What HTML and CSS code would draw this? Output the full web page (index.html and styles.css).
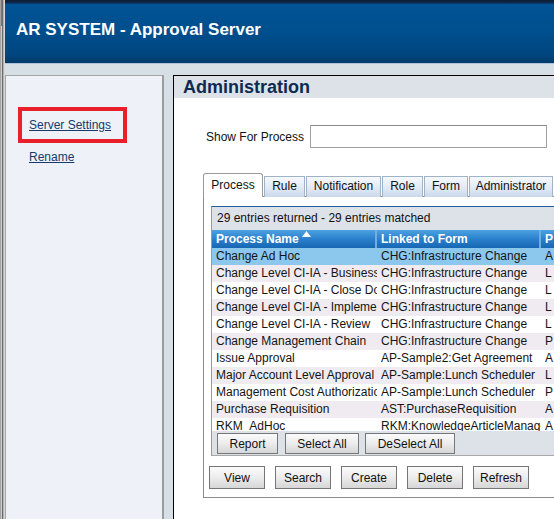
FILE: index.html
```html
<!DOCTYPE html>
<html>
<head>
<meta charset="utf-8">
<link rel="stylesheet" href="styles.css">
</head>
<body>
<div class="page">
  <div class="edge"><div class="edge-blue"></div></div>
  <div class="app">
    <div class="header"><div class="title">AR SYSTEM - Approval Server</div></div>
    <div class="content">
      <div class="side">
        <div class="nav-item highlighted"><a href="#">Server Settings</a></div>
        <div class="nav-item plain"><a href="#">Rename</a></div>
      </div>
      <div class="main">
        <div class="main-head">Administration</div>
        <div class="main-body">
          <div class="form-row">
            <div class="label">Show For Process</div>
            <input class="field" type="text">
          </div>
          <div class="tabs">
            <div class="tab active t-process">Process</div>
            <div class="tab t-rule">Rule</div>
            <div class="tab t-notif">Notification</div>
            <div class="tab t-role">Role</div>
            <div class="tab t-form">Form</div>
            <div class="tab t-admin">Administrator</div>
          </div>
          <div class="tab-panel">
            <div class="grid">
              <div class="info">29 entries returned - 29 entries matched</div>
              <div class="grid-head">
                <div class="hcell">Process Name <svg class="sort" width="9" height="6" viewBox="0 0 9 6"><path d="M0 6 L4.5 0 L9 6 Z" fill="#ffffff"/></svg></div>
                <div class="hcell">Linked to Form</div>
                <div class="hcell last">P</div>
              </div>
              <div class="rows">
                <div class="row selected"><div class="cell">Change Ad Hoc</div><div class="cell">CHG:Infrastructure Change</div><div class="cell">A</div></div>
                <div class="row alt"><div class="cell">Change Level CI-IA - Business</div><div class="cell">CHG:Infrastructure Change</div><div class="cell">L</div></div>
                <div class="row"><div class="cell">Change Level CI-IA - Close Down</div><div class="cell">CHG:Infrastructure Change</div><div class="cell">L</div></div>
                <div class="row alt"><div class="cell">Change Level CI-IA - Implementation</div><div class="cell">CHG:Infrastructure Change</div><div class="cell">L</div></div>
                <div class="row"><div class="cell">Change Level CI-IA - Review</div><div class="cell">CHG:Infrastructure Change</div><div class="cell">L</div></div>
                <div class="row alt"><div class="cell">Change Management Chain</div><div class="cell">CHG:Infrastructure Change</div><div class="cell">P</div></div>
                <div class="row"><div class="cell">Issue Approval</div><div class="cell">AP-Sample2:Get Agreement</div><div class="cell">A</div></div>
                <div class="row alt"><div class="cell">Major Account Level Approval</div><div class="cell">AP-Sample:Lunch Scheduler</div><div class="cell">L</div></div>
                <div class="row"><div class="cell">Management Cost Authorization</div><div class="cell">AP-Sample:Lunch Scheduler</div><div class="cell">P</div></div>
                <div class="row alt"><div class="cell">Purchase Requisition</div><div class="cell">AST:PurchaseRequisition</div><div class="cell">A</div></div>
                <div class="row"><div class="cell">RKM_AdHoc</div><div class="cell">RKM:KnowledgeArticleManager</div><div class="cell">A</div></div>
              </div>
              <div class="grid-bar">
                <button class="btn w-report">Report</button>
                <button class="btn w-selall">Select All</button>
                <button class="btn w-deselall">DeSelect All</button>
              </div>
            </div>
            <div class="actions">
              <button class="btn w-act">View</button>
              <button class="btn w-act">Search</button>
              <button class="btn w-act">Create</button>
              <button class="btn w-act">Delete</button>
              <button class="btn w-act">Refresh</button>
            </div>
          </div>
        </div>
      </div>
    </div>
  </div>
</div>
</body>
</html>
```

FILE: styles.css
```css
html, body {
  margin: 0;
  padding: 0;
}
body {
  width: 554px;
  height: 519px;
  overflow: hidden;
  background: #d6dee6;
  font-family: "Liberation Sans", Arial, sans-serif;
  font-size: 12px;
  color: #111;
}
.page {
  display: flex;
  height: 519px;
  overflow: hidden;
}
.edge {
  width: 5px;
  flex: none;
  background: linear-gradient(to right, #a4a4a4 0 1px, #cdcdcd 1px 2px, #6c6c6c 2px 3px, #b4b4b4 3px 4px, #d8d8d8 4px 5px);
}
.edge-blue {
  margin-left: 1px;
  width: 1px;
  height: 26px;
  background: #4d7fc0;
}
.app {
  flex: 1;
  min-width: 0;
  display: flex;
  flex-direction: column;
}
.header {
  height: 63px;
  flex: none;
  border-bottom: 1px solid #a9c2da;
  background: linear-gradient(#0b1d33 0, #10284a 3px, #005395 4px, #004f8e 30px, #00467f 55px, #003a6a 63px);
}
.title {
  padding: 20px 0 0 11px;
  font-size: 17px;
  line-height: 20px;
  font-weight: bold;
  color: #ffffff;
  white-space: nowrap;
}
.content {
  flex: 1;
  display: flex;
  gap: 9px;
  padding-top: 11px;
  min-height: 0;
}
.side {
  width: 159px;
  flex: none;
  box-sizing: border-box;
  background: #eef2f8;
  border: 1px solid #a6a6a6;
  border-bottom: none;
  border-right: 2px solid #9c9c9c;
  padding-top: 31px;
}
.nav-item a {
  color: #163a6c;
  text-decoration: underline;
  font-size: 12px;
}
.highlighted {
  margin-left: 12px;
  width: 94px;
  height: 28px;
  border: 4px solid #e8202a;
  line-height: 28px;
  padding-left: 7px;
}
.plain {
  margin-top: 6px;
  padding-left: 23px;
  line-height: 16px;
}
.main {
  width: 430px;
  flex: none;
  background: #ffffff;
  border-left: 1px solid #000;
  border-top: 1px solid #000;
}
.main-head {
  height: 22px;
  line-height: 22px;
  background: #dde2e8;
  padding-left: 9px;
  font-size: 18px;
  font-weight: bold;
  color: #0d2b52;
}
.main-body {
  padding-left: 29px;
}
.form-row {
  display: flex;
  align-items: center;
  margin-top: 27px;
  height: 23px;
}
.label {
  width: 99px;
  padding-left: 3px;
  margin-right: 5px;
  overflow: hidden;
  white-space: nowrap;
  flex: none;
  color: #111;
}
.field {
  width: 237px;
  height: 23px;
  box-sizing: border-box;
  border: 1px solid #a0a0a0;
  border-top-color: #8a8a8a;
  margin: 0;
  padding: 0;
  background: #fff;
}
.tabs {
  display: flex;
  align-items: flex-end;
  gap: 1px;
  margin-top: 25px;
  height: 24px;
  margin-bottom: -1px;
  position: relative;
  z-index: 1;
}
.tab {
  height: 21px;
  box-sizing: border-box;
  line-height: 19px;
  text-align: center;
  border: 1px solid #9fb2c6;
  border-bottom: none;
  background: linear-gradient(#f6f9fd, #dfe8f4 60%, #c9d8ec);
  white-space: nowrap;
  color: #111;
  flex: none;
}
.tab.active {
  height: 24px;
  line-height: 22px;
  background: #ffffff;
  border-color: #9a9a9a;
  border-radius: 3px 3px 0 0;
}
.t-process { width: 60px; }
.t-rule { width: 41px; }
.t-notif { width: 75px; }
.t-role { width: 41px; }
.t-form { width: 44px; }
.t-admin { width: 84px; }
.tab-panel {
  height: 302px;
  box-sizing: border-box;
  border: 1px solid #8c8c8c;
  border-right: none;
  padding-top: 9px;
}
.grid {
  margin-left: 7px;
  width: 420px;
  border-left: 1px solid #9a9a9a;
  border-top: 1px solid #245f9d;
  border-bottom: 1px solid #a8a8a8;
}
.info {
  height: 23px;
  line-height: 23px;
  background: #dde2e8;
  padding-left: 5px;
  white-space: nowrap;
}
.grid-head,
.row {
  display: grid;
  grid-template-columns: 165px 164px 1fr;
}
.grid-head {
  height: 18px;
  background: linear-gradient(#4da2e3, #2a80cc 50%, #1767b3);
}
.hcell {
  color: #fff;
  font-weight: bold;
  line-height: 18px;
  padding-left: 4px;
  border-right: 2px solid #6eaee2;
  white-space: nowrap;
  overflow: hidden;
}
.hcell.last {
  border-right: none;
}
.sort {
  vertical-align: 6px;
}
.rows {
  height: 183px;
  overflow: hidden;
}
.row {
  height: 17px;
  line-height: 17px;
  background: #ffffff;
}
.row.alt {
  background: #efebf1;
}
.row.selected {
  background: #8cc7ee;
}
.cell {
  padding-left: 4px;
  white-space: nowrap;
  overflow: hidden;
  color: #141414;
}
.grid-bar {
  background: #dde2e8;
  display: flex;
  align-items: flex-start;
  padding: 2px 0 0 5px;
  box-sizing: border-box;
  height: 24px;
}
.btn {
  height: 21px;
  margin: 0;
  padding: 0;
  border: 1px solid #767676;
  background: linear-gradient(#fbfbfb, #ececec 50%, #d6d6d6);
  font-family: "Liberation Sans", Arial, sans-serif;
  font-size: 12px;
  color: #111;
  flex: none;
}
.w-report { width: 61px; margin-right: 7px; }
.w-selall { width: 74px; margin-right: 6px; }
.w-deselall { width: 90px; }
.actions {
  display: flex;
  gap: 10px;
  margin-top: 10px;
  padding-left: 5px;
}
.w-act {
  width: 56px;
  height: 23px;
}
```
